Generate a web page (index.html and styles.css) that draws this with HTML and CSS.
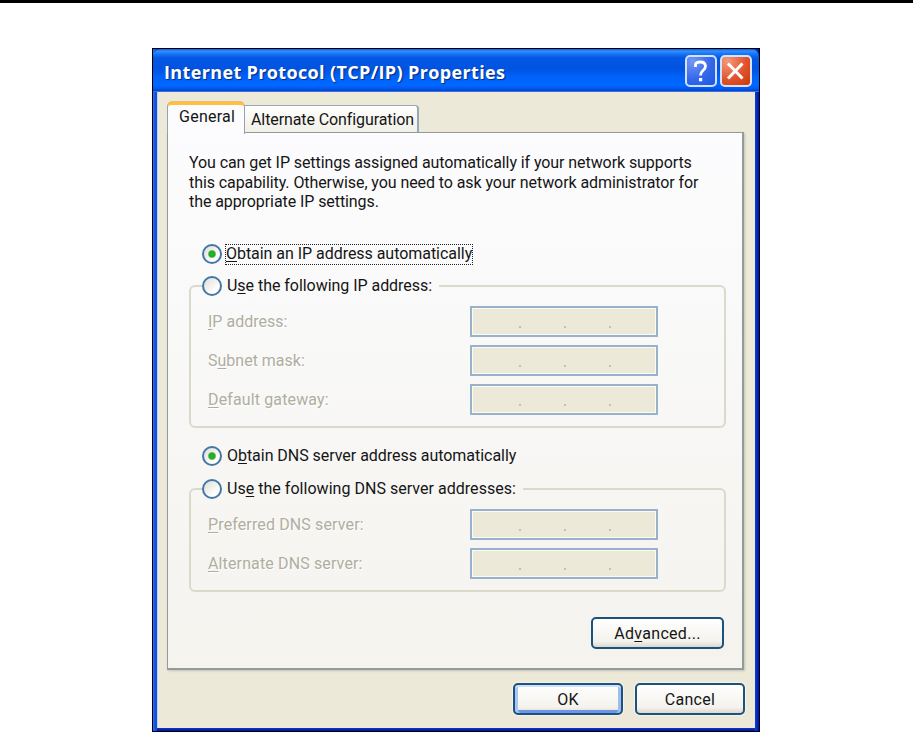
FILE: index.html
```
<!doctype html>
<html lang="en">
<head>
  <meta charset="utf-8">
  <title>Internet Protocol (TCP/IP) Properties</title>
  <link rel="stylesheet" href="styles.css">
</head>
<body>
  <div class="window">
    <div class="titlebar">
      <h1>Internet Protocol (TCP/IP) Properties</h1>
      <button class="title-btn help" aria-label="Help">
        <svg width="31" height="32" viewBox="0 0 31 32"><path d="M10.5 12V9.5Q11 7 15.5 7T20.5 11Q20.5 13.5 18 15.5T15.5 20.5" fill="none" stroke="#fff" stroke-width="2.8"/><rect x="14" y="23" width="3.2" height="3.3" fill="#fff"/></svg>
      </button>
      <button class="title-btn close" aria-label="Close">
        <svg width="31" height="32" viewBox="0 0 31 32"><path d="M8 8.5L22.5 23.5M22.5 8.5L8 23.5" stroke="#fff" stroke-width="3" fill="none"/></svg>
      </button>
    </div>

    <div class="client">
      <div class="tabs">
        <div class="tab active">General</div>
        <div class="tab">Alternate Configuration</div>
      </div>

      <div class="panel">
        <p class="intro">
          You can get IP settings assigned automatically if your network supports<br>
          this capability. Otherwise, you need to ask your network administrator for<br>
          the appropriate IP settings.
        </p>

        <div class="option"><i class="radio on"></i><span class="text focus"><u>O</u>btain an IP address automatically</span></div>

        <fieldset class="ip">
          <legend><i class="radio"></i><span class="text">U<u>s</u>e the following IP address:</span></legend>
          <div class="row"><span class="name"><u>I</u>P address:</span><div class="field"><i></i><i></i><i></i></div></div>
          <div class="row"><span class="name">S<u>u</u>bnet mask:</span><div class="field"><i></i><i></i><i></i></div></div>
          <div class="row"><span class="name wide"><u>D</u>efault gateway:</span><div class="field"><i></i><i></i><i></i></div></div>
        </fieldset>

        <div class="option second"><i class="radio on"></i><span class="text">O<u>b</u>tain DNS server address automatically</span></div>

        <fieldset class="dns">
          <legend><i class="radio"></i><span class="text dns-text">Us<u>e</u> the following DNS server addresses:</span></legend>
          <div class="row"><span class="name wide"><u>P</u>referred DNS server:</span><div class="field"><i></i><i></i><i></i></div></div>
          <div class="row"><span class="name wide"><u>A</u>lternate DNS server:</span><div class="field"><i></i><i></i><i></i></div></div>
        </fieldset>

        <button class="btn advanced">Ad<u>v</u>anced...</button>
      </div>

      <div class="footer">
        <button class="btn ok">OK</button>
        <button class="btn cancel">Cancel</button>
      </div>
    </div>
  </div>
</body>
</html>
```

FILE: styles.css
```
* {
  box-sizing: border-box;
}
body {
  margin: 0;
  height: 732px;
  padding: 45px 0 0 152px;
  border-top: 3px solid #000;
  background: #fff;
  overflow: hidden;
  font-family: Roboto, sans-serif;
  font-size: 16px;
  color: #151515;
}
button {
  font: inherit;
  color: inherit;
  padding: 0;
}
u {
  text-decoration-thickness: 1px;
  text-underline-offset: 2px;
  text-decoration-skip-ink: none;
}
.window {
  width: 608px;
  height: 684px;
  border: 1px solid #000;
  padding: 0 4px 4px;
  background:
    linear-gradient(90deg, #3a70ee 0, #0a55e8 2px, #0a55e8 4px, transparent 4px, transparent 602px, #0a3fe0 602px, #0013a0 606px),
    linear-gradient(#0831d9 0, #0831d9 678px, #0a4be8 678px, #00118f 682px);
}
.titlebar {
  height: 43px;
  margin: 0 -4px;
  padding: 6px 7px 0 11px;
  display: flex;
  border-radius: 8px 8px 0 0;
  background: linear-gradient(#0a5be0 0, #3290ff 2px, #1674f5 5px, #0558e4 9px, #0053e0 20px, #0062fa 28px, #0068ff 36px, #005cf5 39px, #0041cc 42px, #7d9fe4 43px);
}
.titlebar h1 {
  flex: 1;
  margin: 0;
  white-space: nowrap;
  font: bold 18px/34px "Open Sans", sans-serif;
  letter-spacing: 0.36px;
  color: #fff;
  text-shadow: 1px 1px 1px #062a85;
}
.title-btn {
  width: 32px;
  height: 32px;
  border: 2px solid #d5e2fd;
  border-radius: 5px;
  margin-left: 3px;
}
.title-btn svg {
  display: block;
  margin: -2px;
}
.help {
  background: radial-gradient(circle at 20% 15%, #7596f5, #3568ea 55%, #1a57e8);
}
.close {
  background: radial-gradient(circle at 20% 15%, #f29b7d, #e2532e 55%, #cb3805);
}
.client {
  height: 636px;
  padding: 10px 11px 0 9px;
  background: #ece9d8;
  border-left: 1px solid #cbd0dc;
}
.tabs {
  display: flex;
  height: 30px;
  align-items: flex-end;
}
.tab {
  width: 174px;
  height: 27px;
  padding-left: 6px;
  line-height: 27px;
  letter-spacing: -0.1px;
  white-space: nowrap;
  border: 2px solid #97a9b2;
  border-width: 1px 2px 0 0;
  border-radius: 0 4px 0 0;
  background: linear-gradient(#fefefd, #f1f0e8);
}
/* the active tab overlaps the top edge of the panel */
.tab.active {
  position: relative;
  width: 78px;
  height: 32px;
  margin-bottom: -2px;
  padding-left: 11px;
  line-height: 24px;
  letter-spacing: 0.25px;
  border: 1px solid #94a4aa;
  border-top: 3px solid #ffc13c;
  border-bottom: 0;
  border-radius: 5px 5px 0 0;
  background: #fcfcfe;
  box-shadow: 0 -1px 0 -0.5px #e68b2c;
}
.panel {
  width: 577px;
  height: 538px;
  border: 1px solid #919b9c;
  border-width: 1px 2px 2px 1px;
  padding: 19px 16px 0 21px;
  background: linear-gradient(#fcfcfe, #f4f3ee);
  box-shadow: 1px 1px 2px #c5c2b0;
}
.intro {
  height: 91px;
  margin: 0;
  padding-top: 1px;
  line-height: 19.6px;
  letter-spacing: -0.08px;
  white-space: nowrap;
}
.option, legend {
  display: flex;
  align-items: center;
  height: 22px;
}
.option {
  margin-left: 13px;
}
.text {
  height: 22px;
  line-height: 22px;
  margin-left: 4px;
  padding-left: 1px;
  letter-spacing: -0.04px;
  white-space: nowrap;
}
.focus {
  width: 248px;
  height: 21px;
  margin-left: 3px;
  line-height: 20px;
  outline: 1px dotted #222;
  outline-offset: -1px;
}
.radio {
  flex: none;
  width: 20px;
  height: 20px;
  border: 2px solid #4477a6;
  border-radius: 50%;
  background: linear-gradient(135deg, #dddcd5, #fff 75%);
}
.radio.on {
  background: radial-gradient(circle, #2bb32b 0, #23ab23 3px, transparent 4.5px), linear-gradient(135deg, #dddcd5, #fff 75%);
}
fieldset {
  width: 537px;
  margin: 10px 0 0;
  padding: 9px 0 0;
  border: 2px solid #dadacb;
  border-radius: 6px;
}
legend {
  margin-left: 11px;
  padding: 0 7px 0 0;
}
.ip {
  height: 153px;
}
.dns {
  height: 114px;
  margin-top: 11px;
}
.dns-text {
  letter-spacing: 0.03px;
}
.row {
  display: flex;
  justify-content: space-between;
  height: 31px;
  margin-bottom: 8px;
  padding: 0 66px 0 17px;
}
.name {
  line-height: 32px;
  color: #b0ae9f;
  text-shadow: 1px 1px #fff;
}
.wide {
  letter-spacing: 0.13px;
}
.field {
  display: flex;
  gap: 43px;
  width: 188px;
  height: 31px;
  padding: 18px 0 0 47px;
  border: 2px solid #98b2cc;
  background: #ece9d8;
  box-shadow: inset 0 0 0 1px #fbfaf5;
}
.field i {
  width: 2px;
  height: 2px;
  background: #c4c1b2;
}
.second {
  margin-top: 17px;
}
.btn {
  display: block;
  height: 32px;
  letter-spacing: 0.3px;
  border: 2px solid #1c5180;
  border-radius: 5px;
  background: linear-gradient(#fff, #f3f2ec 80%, #dcd8cb);
  box-shadow: 0 0 1px 1px #f6f4ea;
}
.advanced {
  width: 133px;
  margin: 25px 2px 0 auto;
}
.footer {
  display: flex;
  justify-content: flex-end;
  gap: 12px;
  margin: 13px -1px 0 0;
}
.ok, .cancel {
  width: 110px;
}
.ok {
  box-shadow: inset 0 2px #cee0fb, inset 3px 0 #a9c5f3, inset -3px 0 #a0bdf0, inset 0 -3px #6f94e3, 0 0 1px 1px #f6f4ea;
}
```
